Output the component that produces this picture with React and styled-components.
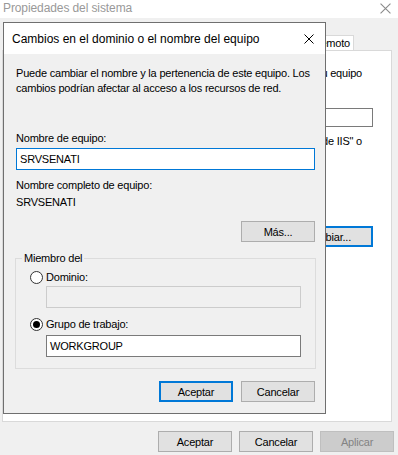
import React from 'react';
import styled, {createGlobalStyle} from 'styled-components';

const GlobalStyle = createGlobalStyle`
  body {
    margin: 0;
    background: #f0f0f0;
    font-family: "Liberation Sans", Arial, sans-serif;
    font-size: 11px;
    letter-spacing: -0.2px;
    color: #000;
  }
  * { box-sizing: border-box; }
`

const CloseIcon = ({color = '#000', size = 10}) => (
  <svg width={size} height={size} viewBox="0 0 10 10">
    <path d="M0.5 0.5 L9.5 9.5 M9.5 0.5 L0.5 9.5" stroke={color} strokeWidth="1" fill="none" />
  </svg>
)

const Radio = ({checked, children, top = 0}) => (
  <RadioRow $top={top}>
    <RadioCircle>{checked && <RadioDot />}</RadioCircle>
    <span>{children}</span>
  </RadioRow>
)

const App = () => {
  return (
    <Desktop>
      <GlobalStyle />
      <Window>
        <WinTitle>
          <span>Propiedades del sistema</span>
          <CloseIcon color="#8a8a8a" size={11} />
        </WinTitle>
        <WinBody>
          <TabStrip>
            <Tab>Nombre de equipo</Tab>
            <Tab>Hardware</Tab>
            <Tab>Opciones avanzadas</Tab>
            <Tab>Acceso remoto</Tab>
          </TabStrip>
          <Panel>
            <PanelText $top={15}>Windows usa la información siguiente para identificar su equipo</PanelText>
            <PanelInput />
            <PanelText $top={7}>Por ejemplo: "Equipo de la cocina" o "Servidor de IIS" o</PanelText>
            <Button $primary $width={92} style={{marginTop: 77}}>Cambiar...</Button>
          </Panel>
        </WinBody>
        <ButtonRow $gap={7} $pad="9px 4px 0 0">
          <Button $width={74}>Aceptar</Button>
          <Button $width={74}>Cancelar</Button>
          <Button $width={74} disabled>Aplicar</Button>
        </ButtonRow>
      </Window>

      <Dialog>
        <DlgTitle>
          <span>Cambios en el dominio o el nombre del equipo</span>
          <CloseIcon />
        </DlgTitle>
        <DlgBody>
          <Intro>
            Puede cambiar el nombre y la pertenencia de este equipo. Los<br />
            cambios podrían afectar al acceso a los recursos de red.
          </Intro>
          <Label $top={35}>Nombre de equipo:</Label>
          <TextBox $focused>SRVSENATI</TextBox>
          <Label $top={8}>Nombre completo de equipo:</Label>
          <Label $top={2}>SRVSENATI</Label>
          <ButtonRow $gap={8} $pad="11px 0 0 0">
            <Button $width={74}>Más...</Button>
          </ButtonRow>
          <GroupBox>
            <legend>Miembro del</legend>
            <GroupInner>
              <Radio top={4}>Dominio:</Radio>
              <TextBox $disabled $top={1} $indent />
              <Radio checked top={9}>Grupo de trabajo:</Radio>
              <TextBox $top={3} $indent>WORKGROUP</TextBox>
            </GroupInner>
          </GroupBox>
          <ButtonRow $gap={8} $pad="12px 0 0 0">
            <Button $primary $width={74}>Aceptar</Button>
            <Button $width={74}>Cancelar</Button>
          </ButtonRow>
        </DlgBody>
      </Dialog>
    </Desktop>
  );
}

export default App;

const Desktop = styled.div`
  position: relative;
  width: 398px;
  height: 455px;
  overflow: hidden;
  background: #f0f0f0;
`

const Window = styled.div`
  display: flex;
  flex-direction: column;
  height: 100%;
`

const WinTitle = styled.div`
  height: 18px;
  background: #fff;
  display: flex;
  align-items: center;
  justify-content: space-between;
  padding: 0 7px 2px 3px;
  color: #999;
  font-size: 12px;
  letter-spacing: -0.1px;
`

const WinBody = styled.div`
  display: flex;
  flex-direction: column;
  padding: 0 6px 0 2px;
`

const TabStrip = styled.div`
  height: 32px;
  display: flex;
  align-items: flex-end;
  justify-content: flex-end;
  padding-right: 38px;
`

const Tab = styled.div`
  height: 15px;
  padding: 0 3px;
  border: 1px solid #d9d9d9;
  border-bottom: none;
  margin-left: -1px;
  background: #fff;
  line-height: 14px;
  white-space: nowrap;
`

const Panel = styled.div`
  height: 372px;
  background: #fff;
  border: 1px solid #d9d9d9;
  overflow: hidden;
  display: flex;
  flex-direction: column;
  align-items: flex-end;
  padding-right: 18px;
`

const PanelText = styled.div`
  margin-top: ${p => p.$top || 0}px;
  margin-right: 11px;
  white-space: nowrap;
  line-height: 15px;
`

const PanelInput = styled.div`
  margin-top: 27px;
  width: 200px;
  height: 19px;
  border: 1px solid #7a7a7a;
  background: #fff;
`

const Dialog = styled.div`
  position: absolute;
  left: 3px;
  top: 22px;
  width: 323px;
  height: 392px;
  border: 1px solid #6f6f6f;
  background: #f0f0f0;
  display: flex;
  flex-direction: column;
`

const DlgTitle = styled.div`
  height: 31px;
  flex-shrink: 0;
  background: #fff;
  display: flex;
  align-items: center;
  justify-content: space-between;
  padding: 0 11px 0 8px;
  font-size: 12px;
  letter-spacing: 0;
`

const DlgBody = styled.div`
  display: flex;
  flex-direction: column;
  padding: 0 10px 0 12px;
`

const Intro = styled.p`
  margin: 12px 0 0;
  line-height: 15px;
  white-space: nowrap;
`

const Label = styled.div`
  margin-top: ${p => p.$top || 0}px;
  line-height: 15px;
`

const TextBox = styled.div`
  margin-top: ${p => p.$top ?? 2}px;
  margin-left: ${p => p.$indent ? 16 : 0}px;
  height: 22px;
  padding: 0 3px;
  display: flex;
  align-items: center;
  border: 1px solid ${p => p.$focused ? '#0078d7' : p.$disabled ? '#cccccc' : '#7a7a7a'};
  background: ${p => p.$disabled ? '#f0f0f0' : '#fff'};
`

const ButtonRow = styled.div`
  display: flex;
  justify-content: flex-end;
  gap: ${p => p.$gap}px;
  padding: ${p => p.$pad};
`

const Button = styled.button`
  width: ${p => p.$width}px;
  height: 21px;
  padding: 0;
  font-family: inherit;
  font-size: 11px;
  letter-spacing: -0.2px;
  color: #000;
  background: #e1e1e1;
  border: ${p => p.$primary ? '2px solid #0078d7' : '1px solid #adadad'};
  &:disabled {
    background: #cccccc;
    border-color: #bfbfbf;
    color: #838383;
  }
`

const GroupBox = styled.fieldset`
  margin: 9px -1px 0;
  padding: 0 14px 11px 6px;
  border: 1px solid #dcdcdc;
  legend {
    padding: 0 2px;
    line-height: 15px;
  }
`

const GroupInner = styled.div`
  display: flex;
  flex-direction: column;
  padding-left: 8px;
`

const RadioRow = styled.div`
  display: flex;
  align-items: center;
  gap: 3px;
  line-height: 15px;
  margin-top: ${p => p.$top}px;
`

const RadioCircle = styled.span`
  width: 13px;
  height: 13px;
  border-radius: 50%;
  border: 1px solid #333;
  background: #fff;
  display: flex;
  align-items: center;
  justify-content: center;
`

const RadioDot = styled.span`
  width: 7px;
  height: 7px;
  border-radius: 50%;
  background: #000;
`
